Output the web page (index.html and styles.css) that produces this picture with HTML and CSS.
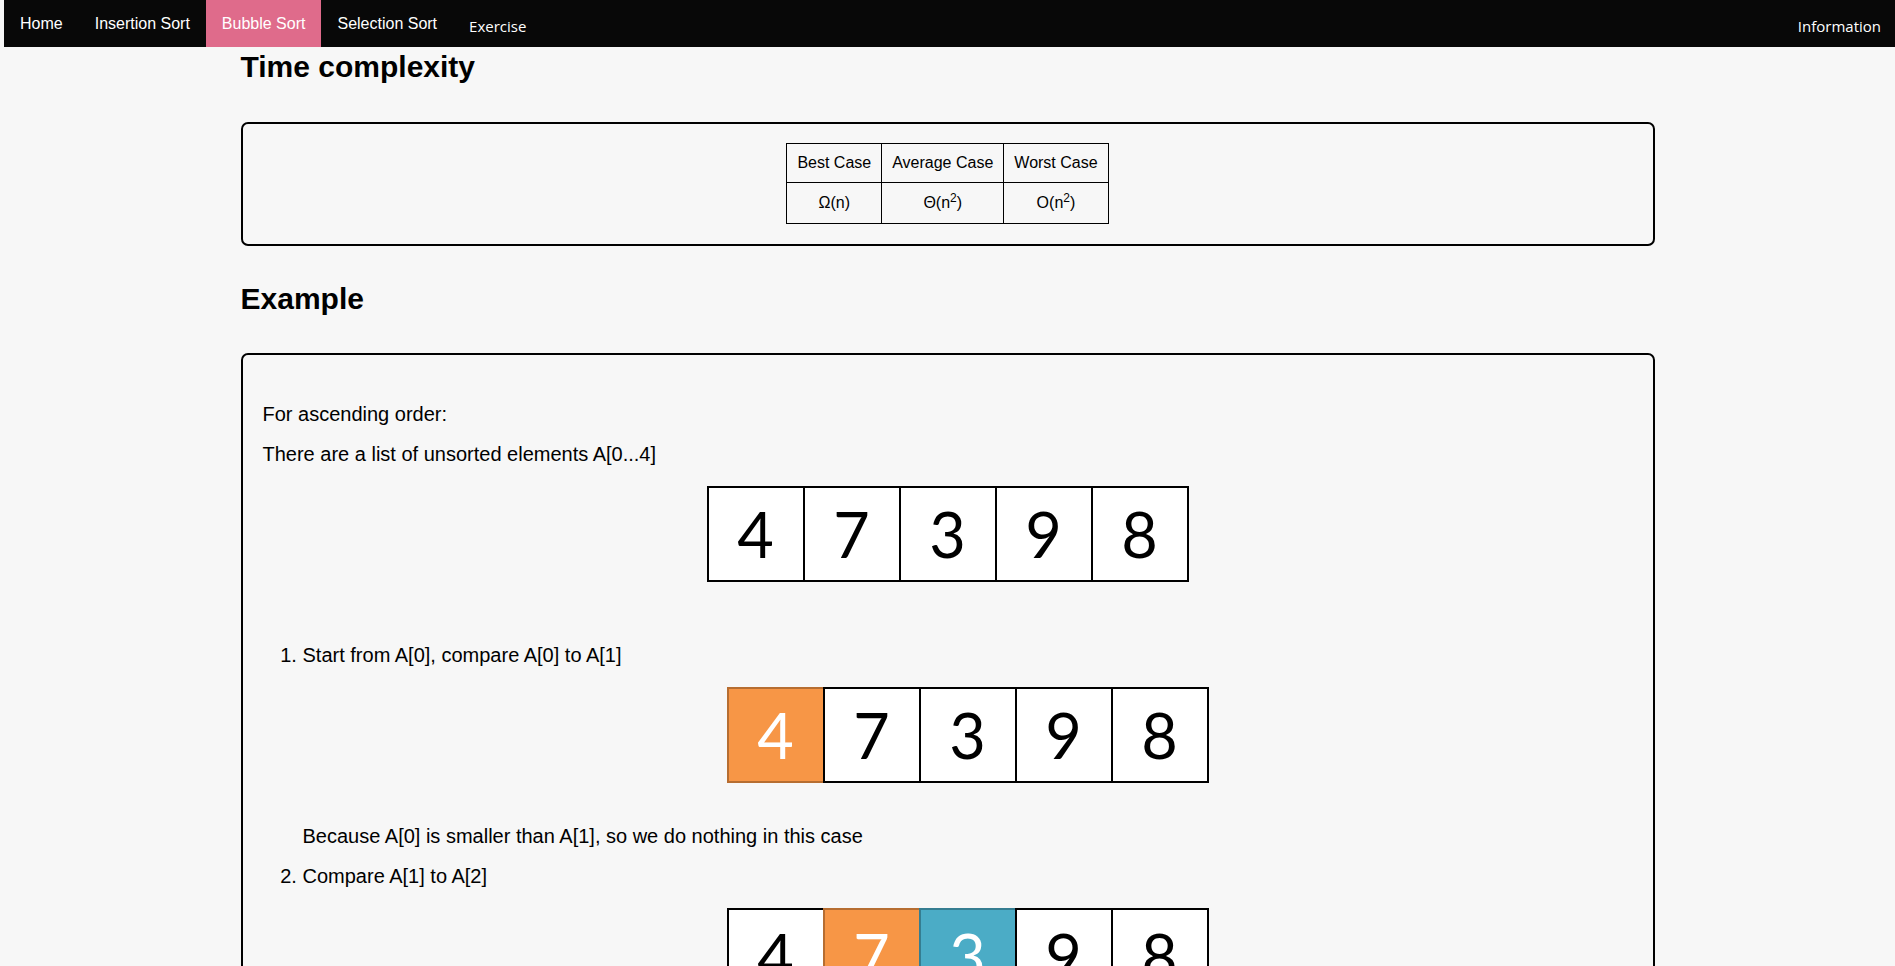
FILE: index.html
```html
<!DOCTYPE html>
<html lang="en">
<head>
<meta charset="utf-8">
<title>Bubble Sort</title>
<link rel="stylesheet" href="styles.css">
</head>
<body>
<nav class="topnav">
  <a class="nav-link" href="#">Home</a>
  <a class="nav-link" href="#">Insertion Sort</a>
  <a class="nav-link active" href="#">Bubble Sort</a>
  <a class="nav-link" href="#">Selection Sort</a>
  <a class="nav-link alt" href="#">Exercise</a>
  <a class="nav-link alt info" href="#">Information</a>
</nav>

<main class="page">
  <h2 class="section-title first">Time complexity</h2>
  <section class="card card-table">
    <table class="complexity">
      <tr class="row-head">
        <td>Best Case</td>
        <td>Average Case</td>
        <td>Worst Case</td>
      </tr>
      <tr class="row-val">
        <td>&Omega;(n)</td>
        <td>&Theta;(n<sup>2</sup>)</td>
        <td>O(n<sup>2</sup>)</td>
      </tr>
    </table>
  </section>

  <h2 class="section-title">Example</h2>
  <section class="card card-example">
    <p class="line lead">For ascending order:</p>
    <p class="line">There are a list of unsorted elements A[0...4]</p>
    <div class="array-wrap">
      <div class="array">
        <div class="cell">4</div>
        <div class="cell">7</div>
        <div class="cell">3</div>
        <div class="cell">9</div>
        <div class="cell">8</div>
      </div>
    </div>

    <ol class="steps">
      <li class="step">
        <p class="line">Start from A[0], compare A[0] to A[1]</p>
        <div class="array-wrap">
          <div class="array">
            <div class="cell orange">4</div>
            <div class="cell">7</div>
            <div class="cell">3</div>
            <div class="cell">9</div>
            <div class="cell">8</div>
          </div>
        </div>
        <p class="line note">Because A[0] is smaller than A[1], so we do nothing in this case</p>
      </li>
      <li class="step next">
        <p class="line">Compare A[1] to A[2]</p>
        <div class="array-wrap">
          <div class="array">
            <div class="cell">4</div>
            <div class="cell orange">7</div>
            <div class="cell blue">3</div>
            <div class="cell">9</div>
            <div class="cell">8</div>
          </div>
        </div>
        <p class="line note">Because A[1] is greater than A[2], so we swap them</p>
      </li>
    </ol>
  </section>
</main>
</body>
</html>
```

FILE: styles.css
```css
html {
  scrollbar-width: none;
}

body {
  margin: 0;
  background: #f7f7f7;
  color: #000;
  font-family: "Liberation Sans", Arial, sans-serif;
}

/* ---------- Top navigation ---------- */
.topnav {
  display: flex;
  align-items: stretch;
  height: 47px;
  margin-left: 4px;
  background: #080808;
}

.nav-link {
  display: flex;
  align-items: center;
  padding: 0 16px;
  color: #fff;
  text-decoration: none;
  font-family: "Liberation Sans", Arial, sans-serif;
  font-size: 16px;
}

.nav-link.active {
  background: #df6b8b;
}

.nav-link.alt {
  font-family: "Open Sans", "Noto Sans", sans-serif;
  font-size: 15px;
  padding-top: 5px;
}

.nav-link.info {
  margin-left: auto;
  padding-right: 14px;
}

/* ---------- Page ---------- */
.page {
  width: 1414px;
  margin: 0 auto;
}

.section-title {
  margin: 36px 0 0;
  font-size: 30px;
  line-height: 34px;
  font-weight: bold;
}

.section-title.first {
  margin-top: 3px;
}

.card {
  border: 2px solid #000;
  border-radius: 7px;
  margin-top: 37px;
}

.card-table {
  margin-top: 38px;
  padding: 19px 20px 20px;
  display: flex;
  justify-content: center;
}

.complexity {
  border-collapse: collapse;
  font-size: 16px;
}

.complexity td {
  border: 1px solid #000;
  padding: 0 10px;
  text-align: center;
}

.row-head td {
  height: 38px;
}

.row-val td {
  height: 40px;
}

.complexity sup {
  font-size: 12px;
  line-height: 0;
}

/* ---------- Example ---------- */
.card-example {
  padding: 20px 20px 40px;
}

.line {
  margin: 17px 0 0;
  font-size: 20px;
  line-height: 23px;
}

.line.lead {
  margin-top: 28px;
}

.array-wrap {
  display: flex;
  justify-content: center;
  margin-top: 20px;
}

.array {
  display: flex;
}

.cell {
  box-sizing: border-box;
  width: 98px;
  height: 96px;
  border: 2px solid #000;
  background: #fff;
  display: flex;
  align-items: center;
  justify-content: center;
  font-family: Lato, "Open Sans", sans-serif;
  font-size: 63px;
  line-height: 1.2;
  color: #000;
}

.cell + .cell {
  margin-left: -2px;
}

.cell.orange {
  background: #f79646;
  border-color: #b66d31;
  color: #fff;
}

.cell.blue {
  background: #4bacc6;
  border-color: #357d91;
  color: #fff;
}

.steps {
  margin: 62px 0 0;
  padding-left: 40px;
  font-size: 20px;
  line-height: 23px;
}

.step > .line:first-child {
  margin-top: 0;
}

.step.next {
  margin-top: 17px;
}

.line.note {
  margin-top: 42px;
}
```
